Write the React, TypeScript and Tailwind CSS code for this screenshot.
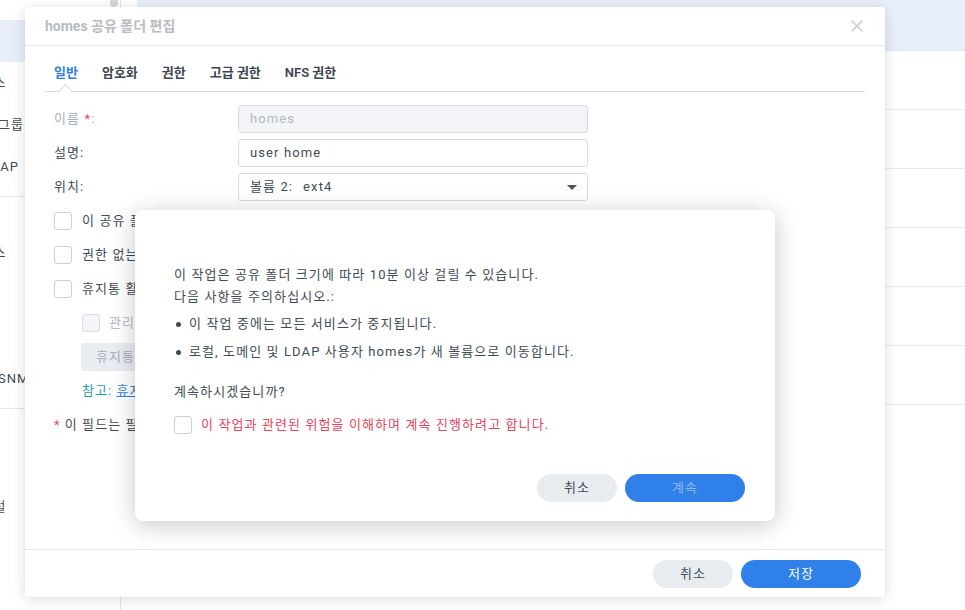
import { X } from 'lucide-react';
import type { ReactNode } from 'react';

const groups = [
  { title: '파일 공유', head: 'h-[20px]', items: ['공유 폴더', '파일 서비스', '사용자 및 그룹', '도메인/LDAP'] },
  { title: '연결', head: 'h-[35px]', items: ['외부 액세스', '네트워크', '보안', '터미널 및 SNMP'] },
  { title: '시스템', head: 'h-[35px]', items: ['정보 센터', '로그인 포털', '지역 옵션'] },
];

const Box = ({ disabled }: { disabled?: boolean }) => (
  <span
    className={
      disabled
        ? 'w-[18px] h-[18px] shrink-0 rounded-[3px] border border-[#d9dee5] bg-[#f3f5f8]'
        : 'w-[18px] h-[18px] shrink-0 rounded-[3px] border border-[#c9d1db] bg-white'
    }
  />
);

function Sidebar() {
  return (
    <aside className="relative w-[121px] shrink-0 h-full border-r border-[#e3e6ea] overflow-hidden">
      <div className="absolute right-[2px] top-0 w-[8px] h-[7px] rounded-b-[4px] bg-[#d5d8dc]" />
      <nav className="-ml-[87px] w-[200px]">
        {groups.map((g, gi) => (
          <div key={g.title} className={gi > 0 ? 'mt-[8px] border-t border-[#e3e6ea]' : ''}>
            <div className={`${g.head} flex items-center pl-[8px] font-semibold text-[#8a939c] whitespace-nowrap`}>
              {g.title}
            </div>
            {g.items.map((item, i) => (
              <div
                key={item}
                className={`h-[42px] flex items-center pl-[24px] whitespace-nowrap ${gi === 0 && i === 0 ? 'bg-[#e7eefa]' : ''}`}
              >
                {item}
              </div>
            ))}
          </div>
        ))}
      </nav>
    </aside>
  );
}

const Row = ({ label, children }: { label: ReactNode; children: ReactNode }) => (
  <div className="h-[28px] flex items-center">
    <div className="w-[184px] shrink-0">{label}</div>
    {children}
  </div>
);

function EditDialog() {
  return (
    <div className="absolute left-[25px] top-[7px] w-[860px] h-[590px] bg-white rounded-[3px] shadow-[0_2px_14px_rgba(0,0,0,0.14)] flex flex-col">
      <div className="h-[39px] shrink-0 pl-[20px] pr-[18px] flex items-center justify-between border-b border-[#e3e8ef] tracking-normal">
        <span className="text-[14px] font-bold text-[#b7bcc3]">homes 공유 폴더 편집</span>
        <X className="w-[20px] h-[20px] text-[#c8cdd3]" strokeWidth={2} />
      </div>

      <div className="relative mx-[20px] h-[46px] shrink-0 pt-[8px] pl-[9px] flex items-center gap-[24px] border-b border-[#d8dfe8] font-semibold text-[#3d4650] tracking-normal">
        <span className="text-[#2f7fe0]">일반</span>
        <span>암호화</span>
        <span>권한</span>
        <span>고급 권한</span>
        <span>NFS 권한</span>
        <span className="absolute left-[16px] -bottom-[4px] w-[9px] h-[9px] rotate-45 bg-white border-l border-t border-[#d8dfe8]" />
      </div>

      <div className="flex-1 px-[29px] pt-[13px] flex flex-col gap-[6px]">
        <Row
          label={
            <span className="text-[#a9afb6]">
              이름 <span className="text-[#e5484d]">*</span>:
            </span>
          }
        >
          <div className="w-[350px] h-[28px] rounded-[3px] border border-[#d6dce4] bg-[#f2f4f7] pl-[11px] flex items-center text-[#b3b9c0]">
            homes
          </div>
        </Row>
        <Row label="설명:">
          <div className="w-[350px] h-[28px] rounded-[3px] border border-[#d6dce4] bg-white pl-[11px] flex items-center">
            user home
          </div>
        </Row>
        <Row label="위치:">
          <div className="w-[350px] h-[28px] rounded-[3px] border border-[#d6dce4] bg-white pl-[11px] pr-[10px] flex items-center">
            <span>볼륨 2:</span>
            <span className="ml-[10px]">ext4</span>
            <span className="ml-auto w-0 h-0 border-l-[5px] border-r-[5px] border-t-[5px] border-l-transparent border-r-transparent border-t-[#4a5563]" />
          </div>
        </Row>

        <div className="h-[28px] flex items-center gap-[10px]">
          <Box />
          <span className="whitespace-nowrap">이 공유 폴더를 "내 네트워크 위치"에서 숨기기</span>
        </div>
        <div className="h-[28px] flex items-center gap-[10px]">
          <Box />
          <span className="whitespace-nowrap">권한 없는 사용자로부터 하위 폴더 및 파일 숨기기</span>
        </div>
        <div className="h-[28px] flex items-center gap-[10px]">
          <Box />
          <span>휴지통 활성화</span>
        </div>
        <div className="h-[28px] ml-[28px] flex items-center gap-[9px] text-[#b3b9c0]">
          <Box disabled />
          <span>관리자만 액세스 허용</span>
        </div>
        <div className="h-[28px] ml-[27px] self-start px-[15px] rounded-[3px] bg-[#e9edf2] text-[#a7aeb6] flex items-center">
          휴지통 비우기
        </div>
        <div className="h-[28px] ml-[28px] flex items-center">
          <span className="text-[#1aa39f]">참고:</span>
          <span className="ml-[4px] text-[#2f7fe0] underline">휴지통 비우기 일정 구성</span>
        </div>
        <div className="h-[28px] flex items-center">
          <span className="text-[#e5484d] mr-[4px]">*</span>
          <span>이 필드는 필수입니다.</span>
        </div>
      </div>

      <div className="h-[48px] shrink-0 border-t border-[#e3e8ef] flex items-center justify-end gap-[8px] pr-[24px]">
        <button className="w-[80px] h-[28px] rounded-full bg-[#e8ecf1] text-[#414b55]">취소</button>
        <button className="w-[120px] h-[28px] rounded-full bg-[#2f80e8] text-white">저장</button>
      </div>
    </div>
  );
}

function ConfirmModal() {
  return (
    <div className="absolute left-[135px] top-[210px] w-[640px] h-[311px] rounded-[8px] bg-white shadow-[0_4px_24px_rgba(0,0,0,0.22)] flex flex-col pl-[39px] pr-[30px] pt-[54px] pb-[19px]">
      <p className="leading-[22px]">
        이 작업은 공유 폴더 크기에 따라 10분 이상 걸릴 수 있습니다.
        <br />
        다음 사항을 주의하십시오.:
      </p>
      <ul className="mt-[5px] flex flex-col gap-[6px]">
        <li className="h-[22px] flex items-center">
          <span className="w-[5px] h-[5px] rounded-full bg-[#414b55] ml-[2px] mr-[8px]" />
          이 작업 중에는 모든 서비스가 중지됩니다.
        </li>
        <li className="h-[22px] flex items-center">
          <span className="w-[5px] h-[5px] rounded-full bg-[#414b55] ml-[2px] mr-[8px]" />
          로컬, 도메인 및 LDAP 사용자 homes가 새 볼륨으로 이동합니다.
        </li>
      </ul>
      <p className="mt-[18px] leading-[22px]">계속하시겠습니까?</p>
      <div className="mt-[11px] h-[22px] flex items-center gap-[9px] text-[#e8435a]">
        <Box />
        <span>이 작업과 관련된 위험을 이해하며 계속 진행하려고 합니다.</span>
      </div>
      <div className="mt-auto flex justify-end gap-[8px]">
        <button className="w-[80px] h-[28px] rounded-full bg-[#e8ecf1] text-[#414b55]">취소</button>
        <button className="w-[120px] h-[28px] rounded-full bg-[#2f80e8] text-[#8dbaf2]">계속</button>
      </div>
    </div>
  );
}

export default function App() {
  return (
    <div className="relative w-[965px] h-[610px] overflow-hidden bg-white text-[13px] tracking-[1.1px] text-[#414b55] font-[Roboto,'Noto_Sans_CJK_KR',sans-serif]">
      <div className="flex h-full">
        <Sidebar />
        <main className="ml-[16px] flex-1 flex flex-col">
          <div className="h-[51px] shrink-0 bg-[#e8eefa] border-b border-[#dfe6f1]" />
          {[0, 1, 2, 3, 4, 5].map((i) => (
            <div key={i} className="h-[59px] shrink-0 border-b border-[#e8eaed]" />
          ))}
        </main>
      </div>
      <EditDialog />
      <ConfirmModal />
    </div>
  );
}
